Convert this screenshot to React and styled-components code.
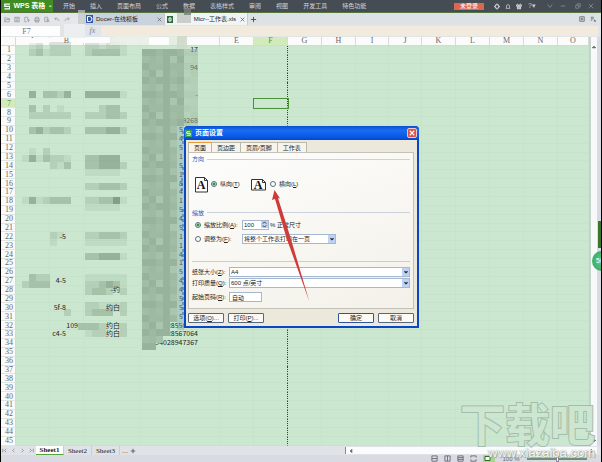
import { useState } from 'react';

import styled, { createGlobalStyle } from 'styled-components';

const GlobalStyle = createGlobalStyle`
  * {
    box-sizing: border-box;
  }

  body {
    margin: 0;
    overflow: hidden;
    font-family: 'Liberation Sans', 'Noto Sans CJK SC', sans-serif;
    font-size: 7px;
    line-height: 8px;
    color: #222;
  }

  button, input, select {
    font: inherit;
    color: inherit;
    margin: 0;
    padding: 0;
    border: none;
    background: none;
    outline: none;
  }
`;

const Window = styled.div`
  position: relative;
  display: flex;
  flex-direction: column;
  min-height: 100vh;
  border-left: 1px solid #000;
  border-right: 1px solid #000;
  background: #dde1e6;
  overflow: hidden;
`;

/* ---------- top bars ---------- */

const MenuBar = styled.header`
  display: flex;
  align-items: center;
  height: 13px;
  background: #454c54;
  border-bottom: 1px solid #55753f;
`;

const Brand = styled.button`
  display: flex;
  align-items: center;
  gap: 3px;
  width: 52px;
  height: 12px;
  padding-left: 3px;
  background: #3f8c22;
  color: #fff;
  white-space: nowrap;
`;

const Menus = styled.nav`
  display: flex;
  flex: 1;
  gap: 15px;
  padding-left: 10px;
`;

const MenuButton = styled.button`
  font-size: 6px;
  color: #d3d6d8;
  white-space: nowrap;
`;

const WindowTools = styled.div`
  display: flex;
  align-items: center;
  gap: 5px;
  padding-right: 7px;
`;

const LoginButton = styled.button`
  width: 30px;
  height: 7px;
  font-size: 6px;
  line-height: 7px;
  background: #d9684c;
  color: #fff;
`;

const FrameTools = styled.div`
  display: flex;
  gap: 5px;
  padding-left: 5px;
`;

const IconButton = styled.button`
  display: flex;
  align-items: center;
  justify-content: center;
  width: ${({ $wide }) => ($wide ? 10 : 6)}px;
  height: 8px;
  color: ${({ $color }) => $color || '#c8cbce'};
`;

const TabBar = styled.div`
  display: flex;
  align-items: center;
  height: 12px;
  background: #dde3e4;
`;

const QuickTools = styled.div`
  display: flex;
  align-items: center;
  gap: 4px;
  width: 83px;
  height: 12px;
  padding-left: 3px;
  background: #e3e5e9;
`;

const FileTab = styled.div`
  display: flex;
  align-items: center;
  gap: 3px;
  width: ${({ $active }) => ($active ? 83 : 81)}px;
  height: 12px;
  padding: 0 2px;
  font-size: 6px;
  background: ${({ $active }) => ($active ? '#f1f4f4' : '#c9d3df')};
  border-right: 1px solid #c6cccf;
  white-space: nowrap;
`;

const FileName = styled.span`
  flex: 1;
  text-align: ${({ $end }) => ($end ? 'right' : 'left')};
`;

const TabBarEnd = styled.div`
  display: flex;
  align-items: center;
  gap: 5px;
  margin-left: auto;
  padding-right: 5px;
`;

const FormulaBar = styled.div`
  display: flex;
  height: 12px;
  padding: 1px 3px 1px 0;
  background: #e1e4e8;
`;

const NameBox = styled.input`
  width: 59px;
  padding-right: 8px;
  background: #fdfdfd;
  font-family: 'Liberation Serif', serif;
  font-size: 8px;
  text-align: center;
  color: #777;
`;

const FxButton = styled.button`
  width: 41px;
  padding-left: 24px;
  font-family: 'Liberation Serif', serif;
  font-size: 8px;
  font-style: italic;
  color: #888;
`;

const FormulaInput = styled.input`
  flex: 1;
  min-width: 0;
  background: #f2ebdd;
`;

/* ---------- sheet ---------- */

const SheetArea = styled.main`
  position: relative;
  display: flex;
  flex: 1;
`;

const Grid = styled.table`
  flex: 1;
  height: calc(100vh - 53px);
  table-layout: fixed;
  border-collapse: separate;
  border-spacing: 0;
  background: #cbe7cf;
`;

const Col = styled.col`
  width: ${({ $width }) => $width}px;
`;

const ColumnHead = styled.th`
  height: 9px;
  padding: 0;
  font-family: 'Liberation Serif', serif;
  font-size: 8px;
  font-weight: normal;
  line-height: 8px;
  color: ${({ $active }) => ($active ? '#5b9440' : '#666')};
  background: ${({ $active }) => ($active ? '#d3ebba' : '#fbfcfa')};
  border-right: 1px solid #d5dcd5;
  border-bottom: 1px solid #cfdccf;
`;

const RowHead = styled.th`
  padding: 0 0 0 2px;
  font-family: 'Liberation Serif', serif;
  font-size: 8px;
  font-weight: normal;
  line-height: 7px;
  color: ${({ $active }) => ($active ? '#5b9440' : '#666')};
  background: ${({ $active }) => ($active ? '#d3ebba' : '#fafbfa')};
  border-right: 1px solid #cfdccf;
  border-bottom: 1px solid #dfe5df;
`;

const Cell = styled.td`
  padding: 0 ${({ $end }) => $end || 0}px 0 0;
  font-family: 'Noto Sans CJK SC', sans-serif;
  line-height: 7px;
  text-align: right;
  white-space: nowrap;
  border-right: 1px ${({ $pageEnd }) => ($pageEnd ? 'dotted #2f4833' : 'solid #c6e3cb')};
  border-bottom: 1px solid #c6e3cb;
  outline: ${({ $active }) => ($active ? '1px solid #4c9136' : 'none')};
`;

const MosaicLayer = styled.svg`
  position: absolute;
  left: 0;
  top: 0;
  pointer-events: none;
`;

const Scrollbar = styled.div`
  display: flex;
  flex-direction: column;
  align-items: center;
  justify-content: space-between;
  width: 12px;
  padding: 7px 4px 2px 2px;
  background: linear-gradient(to right, #c9d3ce 2px, #f8f9fa 2px, #f8f9fa 8px, #d8dae4 8px);
`;

const SheetBar = styled.div`
  display: flex;
  align-items: center;
  height: 9px;
  background: #dfe2e6;
`;

const SheetNav = styled.div`
  display: flex;
  gap: 2px;
  width: 35px;
  color: #8a9096;
`;

const SheetTab = styled.button`
  width: 28px;
  height: 9px;
  font-family: 'Liberation Serif', serif;
  font-weight: ${({ $active }) => ($active ? 'bold' : 'normal')};
  background: ${({ $active }) => ($active ? '#fff' : 'transparent')};
  border-right: 1px solid #c9cdd2;
  border-bottom: ${({ $active }) => ($active ? '1px solid #5aa33b' : 'none')};
`;

const HorizontalScroll = styled.div`
  display: flex;
  align-items: center;
  justify-content: space-between;
  width: 42%;
  height: 7px;
  margin-left: auto;
  margin-right: 4px;
  padding: 0 2px;
  background: #fafbfc;
  border-left: 1px solid #888;
`;

const StatusBar = styled.footer`
  display: flex;
  align-items: center;
  justify-content: flex-end;
  gap: 6px;
  height: 7px;
  padding-right: 14px;
  background: #d8dbe2;
  font-size: 6px;
  color: #667;
`;

const ZoomValue = styled.span`
  width: 20px;
  text-align: center;
`;

const ZoomRange = styled.input`
  appearance: none;
  width: 60px;
  height: 2px;
  background: #6c9070;

  &::-webkit-slider-thumb {
    appearance: none;
    width: 3px;
    height: 6px;
    background: #fff;
    border: 1px solid #889;
  }
`;

/* ---------- dialog ---------- */

const Dialog = styled.section`
  position: absolute;
  left: 183px;
  top: 126px;
  width: 235px;
  border: 2px solid #0b47c4;
  border-top: none;
  border-radius: 4px 4px 0 0;
  background: #ece9dc;
`;

const TitleBar = styled.div`
  display: flex;
  align-items: center;
  gap: 3px;
  height: 14px;
  margin: 0 -2px;
  padding: 0 2px 0 1px;
  border-radius: 4px 4px 0 0;
  background: linear-gradient(#0a4fd0, #1a6cf4 30%, #0758e2 80%, #0546c0);
  color: #fff;
`;

const Title = styled.h1`
  flex: 1;
  margin: 0;
  font-size: 7px;
  font-weight: bold;
`;

const CloseButton = styled.button`
  display: flex;
  align-items: center;
  justify-content: center;
  width: 10px;
  height: 10px;
  background: #d9534a;
  border: 1px solid #f1c6c4;
  border-radius: 2px;
`;

const DialogBody = styled.div`
  padding: 2px 3px 3px 2px;
`;

const Tabs = styled.div`
  display: flex;
`;

const DialogTab = styled.button`
  height: 10px;
  padding: 0 5px;
  font-size: 6px;
  line-height: 8px;
  background: #f6f4ec;
  border: 1px solid #b9b9ae;
  border-left-width: ${({ $active }) => ($active ? 1 : 0)}px;
  border-top-color: ${({ $active }) => ($active ? '#e69a3c' : '#b9b9ae')};
  border-bottom: none;
`;

const Panel = styled.div`
  display: flex;
  flex-direction: column;
  height: 157px;
  padding: 2px 3px;
  border: 1px solid #c3c2b8;
  background: linear-gradient(160deg, #fdfdfc, #f3f1e9);
`;

const GroupTitle = styled.h2`
  display: flex;
  align-items: center;
  gap: 3px;
  margin: 0;
  font-size: 6px;
  font-weight: normal;
  color: #2a56c0;

  &::after {
    content: '';
    flex: 1;
    height: 1px;
    background: #ccd2dc;
  }
`;

const Orientation = styled.div`
  display: flex;
  align-items: center;
  height: 46px;
  padding: 0 0 3px 3px;
`;

const Choice = styled.label`
  display: flex;
  align-items: center;
  gap: 3px;
  width: ${({ $width }) => ($width ? `${$width}px` : 'auto')};
  font-size: 6px;
  white-space: nowrap;
`;

const Radio = styled.input`
  appearance: none;
  width: 6px;
  height: 6px;
  border: 1px solid #4f7186;
  border-radius: 50%;
  background: ${({ checked }) => (checked ? 'radial-gradient(#2f9a35 1px, #fff 2px)' : '#fff')};
`;

const FormRow = styled.div`
  display: flex;
  align-items: center;
  height: ${({ $height }) => $height}px;
  padding-left: ${({ $indent }) => $indent || 0}px;
  font-size: 6px;
  white-space: nowrap;
`;

const FieldLabel = styled.label`
  width: 37px;
  font-size: 6px;
`;

const TextBox = styled.input`
  width: ${({ $width }) => $width}px;
  height: 10px;
  padding-left: 2px;
  background: #fff;
  border: 1px solid #a5b8cf;
`;

const SelectWrap = styled.div`
  display: flex;
  width: ${({ $width }) => ($width ? `${$width}px` : 'auto')};
  flex: ${({ $width }) => ($width ? 'none' : 1)};
  height: 10px;
  background: #fff;
  border: 1px solid #a5b8cf;
`;

const Select = styled.select`
  appearance: none;
  flex: 1;
  min-width: 0;
  padding-left: 1px;
  line-height: 8px;
`;

const Arrow = styled.span`
  display: flex;
  align-items: center;
  justify-content: center;
  width: 7px;
  background: #bfd1f4;
`;

const Spinner = styled.span`
  display: flex;
  align-items: center;
  width: 27px;
  height: 10px;
  margin-right: 1px;
  background: #fff;
  border: 1px solid #a5b8cf;
`;

const SpinInput = styled.input`
  flex: 1;
  min-width: 0;
  padding-left: 1px;
`;

const Rule = styled.hr`
  width: 100%;
  margin: 15px 0 4px;
  border: none;
  border-top: 1px solid #cfcec5;
`;

const Actions = styled.div`
  display: flex;
  gap: 4px;
  padding-top: 4px;
`;

const DialogButton = styled.button`
  width: 36px;
  height: 10px;
  margin-left: ${({ $push }) => ($push ? 'auto' : 0)};
  font-size: 6px;
  line-height: 8px;
  background: #fbfaf6;
  border: 1px solid ${({ $primary }) => ($primary ? '#2f5596' : '#56697c')};
  border-radius: 1px;
`;

/* ---------- things that float over the page ---------- */

const Pointer = styled.svg`
  position: absolute;
  left: 267px;
  top: 186px;
  pointer-events: none;
`;

const Watermark = styled.div`
  position: absolute;
  right: 6px;
  bottom: 3px;
  font-family: 'Noto Sans CJK SC', sans-serif;
  font-size: 45px;
  font-weight: bold;
  line-height: 47px;
  text-align: right;
  color: #cde6d1;
  -webkit-text-stroke: 2px #a3bda8;
  paint-order: stroke fill;
  pointer-events: none;
`;

const WatermarkUrl = styled.div`
  font-family: 'Liberation Sans', sans-serif;
  font-size: 13px;
  font-weight: normal;
  line-height: 13px;
  color: #f7f9f7;
  -webkit-text-stroke: 0;
  text-shadow: 0 0 1px #7c8a80, 1px 1px 1px #9aa79e;
`;

const SideHandle = styled.div`
  position: absolute;
  right: 0;
  top: 221px;
  width: 3px;
  height: 27px;
  background: #39762c;
`;

const SideBall = styled.div`
  position: absolute;
  right: -10px;
  top: 251px;
  width: 19px;
  height: 20px;
  padding: 6px 0 0 4px;
  border-radius: 50%;
  background: radial-gradient(#63c988, #2da35c);
  color: #fff;
`;

const columns = [
  ['A', 34], ['B', 34], ['C', 57], ['D', 79], ['E', 34], ['F', 34], ['G', 34], ['H', 34],
  ['I', 33], ['J', 33], ['K', 34], ['L', 34], ['M', 34], ['N', 34], ['O', null],
];

const rows = Array.from({ length: 45 }, (_, i) => i + 1);

const cells = {
  B22: '-5', B27: '4-5', B30: '5f-8', B32: '109', B33: 'c4-5',
  C28: '-约', C30: '约白', C32: '约白', C33: '约白',
  D1: '17', D3: '94', D6: '-', D9: '9268',
  D32: '028550174', D33: '028567064', D34: '94028947367',
};

// leftovers of the id numbers between the blurred strip and the dialog
'5451518415451141544555'.split('').forEach((digit, i) => {
  cells[`D${i + 10}`] = digit;
});

const cellEnd = { A: 0, B: 17, C: 20, D: 21 };

const endOf = (name, row) => {
  if (name === 'B' && row === 32) return 5;
  if (name === 'D' && row > 9 && row < 32) return 36;
  return cellEnd[name];
};

const TILE = 7;
const shades = { a: 0.1, b: 0.2, c: 0.34, d: 0.48, e: 0.66 };

// one string per band of tiles, keyed by its top edge
const bands = {
  42: '..ab.bbb..bbabba',
  49: '..bcabbb..bcccca',
  91: '..d.ccbd..ddddda',
  105: '..c.b.a.....bcc',
  112: '..bbbbbb..bbbccb',
  127: '..cdbccb..cccddb',
  148: '..a.b',
  155: '.adacbba..ccddd',
  162: '.....bac..ccdddb',
  169: '..........aaaaa',
  183: '..........bbcccb',
  197: '.adabccc..bbccea',
  204: '..........aaaaa',
  232: '.....ba...bbcccb',
  239: '.....a....aaaaaa',
  253: '..........ccddda',
  274: '..cbb.....aaaaaa',
  281: '.bccc.....bbcdca',
  288: '..........bccb.b',
  302: '..........bbaaab',
  309: '.......b..bccc.b',
  323: '.........cccb..b',
  330: '..........abb..b',
};

// the strip over the id numbers narrows towards its ends
const stripTiles = (y) => {
  if (y > 341) return 2;
  if (y > 334) return 3;
  if (y > 320) return 4;
  return y < 126 ? 8 : 5;
};

const stripFills = ['#a2bda6', '#9db99f', '#a6c1aa', '#98b39c', '#abc6af', '#9fbaa3'];

const Mosaic = () => {
  const tiles = [];
  Object.entries(bands).forEach(([top, band]) => {
    band.split('').forEach((mark, i) => {
      if (shades[mark]) {
        tiles.push({ x: 14 + i * TILE, y: top - 37, fill: '#5d7a62', opacity: shades[mark] });
      }
    });
  });
  for (let y = 49; y < 350; y += TILE) {
    for (let i = 0; i < stripTiles(y); i += 1) {
      const step = (i * i * 5 + (y / TILE) * (y / TILE) * 3 + (y / TILE) * i) % 6;
      tiles.push({
        x: 141 + i * TILE,
        y: y - 37,
        fill: stripFills[step],
        opacity: i > 5 ? 0.5 : 1,
      });
    }
  }
  return (
    <MosaicLayer width="220" height="320" aria-hidden="true">
      {tiles.map((t) => (
        <rect key={`${t.x}-${t.y}`} x={t.x} y={t.y} width={TILE} height={TILE} fill={t.fill} opacity={t.opacity} />
      ))}
      <rect x="176" y="89" width="7" height="204" fill="#7fa5b4" opacity="0.4" />
      <path d="M182 94v14M182 130v9M181 141v14M182 172v22M182 212v12M182 240v40" stroke="#2c5ea8" strokeDasharray="3 2" />
    </MosaicLayer>
  );
};

const TopBlur = styled.svg`
  position: absolute;
  left: 0;
  top: 0;
  pointer-events: none;
`;

const topTiles = [
  [77, 10, 7, 14, '#c3c9c8', 0.7], [70, 17, 7, 7, '#e6e8ea', 0.9], [63, 24, 21, 14, '#eceef0', 0.9],
  [23, 38, 26, 5, '#fbfcfb', 1], [74, 38, 35, 5, '#fbfcfb', 1],
  [109, 36, 39, 9, '#e9f0e6', 0.9], [148, 38, 20, 6, '#fdfdfd', 1], [168, 36, 16, 9, '#e2ebdf', 0.9],
  [176, 13, 14, 10, '#c5cbc6', 0.9], [183, 8, 7, 7, '#777f77', 0.8], [176, 36, 10, 13, '#ced9cc', 0.9],
];

const Glyph = ({ d, size = 7, width = 1 }) => (
  <svg width={size} height={size} viewBox="0 0 8 8" fill="none" stroke="currentColor" strokeWidth={width}>
    <path d={d} />
  </svg>
);

const WpsLogo = ({ color = '#fff' }) => (
  <svg width="7" height="7" viewBox="0 0 8 8" fill="none" stroke={color} strokeWidth="1.6">
    <path d="M7.5 1H1v2.8h6V7H.5" />
  </svg>
);

const quickIcons = [
  ['打开', 'M1 7V1.500h2l1 1h3V7zM1 7l1.500-3H8'],
  ['保存', 'M1 1h6v6H1zM2.500 1v2h3V1M2.500 7V5h3v2'],
  ['导出', 'M1 1h4v3M1 1v6h3M4 5h4M6 3.500v4'],
  ['打印', 'M2 3V1h4v2M1 3h6v3H1zM2 5h4v2.500H2z'],
  ['预览', 'M1 1h4v6H1zM4 4h2v2H4zM6 6l1.500 1.500'],
  ['撤销', 'M1 3h4l2 3M3 1L1 3l2 2'],
  ['恢复', 'M7 3H3L1 6M5 1l2 2-2 2'],
];

const windowIcons = [
  ['设置', 'M4 1.500a2.500 2.500 0 100 5 2.500 2.500 0 000-5M4 0v2M4 6v2M0 4h2M6 4h2', true],
  ['提醒', 'M1 6.500h6M2 6V3.500a2 2 0 014 0V6', false],
  ['皮肤', 'M2 1L.500 3 2 4v3h4V4l1.500-1L6 1 4 3zM3 3v4M5 3v4', true],
];

const DownArrow = () => (
  <Arrow>
    <Glyph d="M2 3l2 2 2-2" size={6} width={1.5} />
  </Arrow>
);

const PageIcon = ({ landscape }) => (
  <svg width={landscape ? 16 : 13} height="17" viewBox={landscape ? '0 0 16 17' : '0 0 13 17'}>
    <path
      d={landscape ? 'M.5 3.500h11l3 3v7.500H.5z' : 'M.5 1.500h9l3 3v11.500H.5z'}
      fill="#fff"
      stroke="#333"
    />
    <path d={landscape ? 'M11.500 3.500v3h3' : 'M9.500 1.500v3h3'} fill="none" stroke="#333" />
    <text
      x={landscape ? 7 : 6}
      y="13"
      textAnchor="middle"
      fontFamily="Liberation Serif, serif"
      fontWeight="bold"
      fontSize="12"
      fill="#111"
    >
      A
    </text>
  </svg>
);

const PageSetup = () => {
  const [orientation, setOrientation] = useState('portrait');
  const [scaling, setScaling] = useState('ratio');

  return (
    <Dialog role="dialog" aria-label="页面设置">
      <TitleBar>
        <svg width="7" height="7" viewBox="0 0 8 8">
          <rect width="8" height="8" fill="#35a341" />
          <path d="M6 2H2v2h4v2H2" fill="none" stroke="#fff" />
        </svg>
        <Title>页面设置</Title>
        <CloseButton aria-label="关闭">
          <Glyph d="M1 1l6 6M7 1L1 7" size={6} width={1.5} />
        </CloseButton>
      </TitleBar>
      <DialogBody>
        <Tabs>
          {['页面', '页边距', '页眉/页脚', '工作表'].map((tab, i) => (
            <DialogTab key={tab} $active={i === 0}>{tab}</DialogTab>
          ))}
        </Tabs>
        <Panel>
          <GroupTitle>方向</GroupTitle>
          <Orientation>
            <Choice $width={56}>
              <PageIcon />
              <Radio type="radio" name="orientation" checked={orientation === 'portrait'} onChange={() => setOrientation('portrait')} />
              <span>纵向(<u>T</u>)</span>
            </Choice>
            <Choice>
              <PageIcon landscape />
              <Radio type="radio" name="orientation" checked={orientation === 'landscape'} onChange={() => setOrientation('landscape')} />
              <span>横向(<u>L</u>)</span>
            </Choice>
          </Orientation>
          <GroupTitle>缩放</GroupTitle>
          <FormRow $height={16} $indent={3}>
            <Choice $width={47}>
              <Radio type="radio" name="scaling" checked={scaling === 'ratio'} onChange={() => setScaling('ratio')} />
              <span>缩放比例(<u>A</u>):</span>
            </Choice>
            <Spinner>
              <SpinInput aria-label="缩放比例" defaultValue="100" />
              <Arrow>
                <Glyph d="M2 3l2-2 2 2M2 5l2 2 2-2" size={7} />
              </Arrow>
            </Spinner>
            <span>% 正常尺寸</span>
          </FormRow>
          <FormRow $height={14} $indent={3}>
            <Choice $width={47}>
              <Radio type="radio" name="scaling" checked={scaling === 'fit'} onChange={() => setScaling('fit')} />
              <span>调整为(<u>F</u>):</span>
            </Choice>
            <SelectWrap $width={94}>
              <Select aria-label="调整为">
                <option>将整个工作表打印在一页</option>
              </Select>
              <DownArrow />
            </SelectWrap>
          </FormRow>
          <Rule />
          <FormRow $height={11}>
            <FieldLabel htmlFor="paper">纸张大小(<u>Z</u>):</FieldLabel>
            <SelectWrap>
              <Select id="paper">
                <option>A4</option>
              </Select>
              <DownArrow />
            </SelectWrap>
          </FormRow>
          <FormRow $height={11}>
            <FieldLabel htmlFor="quality">打印质量(<u>Q</u>):</FieldLabel>
            <SelectWrap>
              <Select id="quality">
                <option>600 点/英寸</option>
              </Select>
              <DownArrow />
            </SelectWrap>
          </FormRow>
          <FormRow $height={18}>
            <FieldLabel htmlFor="first-page">起始页码(<u>R</u>):</FieldLabel>
            <TextBox id="first-page" $width={33} defaultValue="自动" />
          </FormRow>
        </Panel>
        <Actions>
          <DialogButton>选项(<u>O</u>)...</DialogButton>
          <DialogButton>打印(<u>P</u>)...</DialogButton>
          <DialogButton $push $primary>确定</DialogButton>
          <DialogButton>取消</DialogButton>
        </Actions>
      </DialogBody>
    </Dialog>
  );
};

const Sheet = () => (
  <SheetArea>
    <Grid>
      <colgroup>
        <Col $width={15} />
        {columns.map(([name, width]) => (width ? <Col key={name} $width={width} /> : <col key={name} />))}
      </colgroup>
      <thead>
        <tr>
          <ColumnHead />
          {columns.map(([name]) => (
            <ColumnHead key={name} $active={name === 'F'}>{name}</ColumnHead>
          ))}
        </tr>
      </thead>
      <tbody>
        {rows.map((row) => (
          <tr key={row}>
            <RowHead $active={row === 7}>{row}</RowHead>
            {columns.map(([name]) => (
              <Cell
                key={name}
                $end={endOf(name, row)}
                $pageEnd={name === 'F'}
                $active={name === 'F' && row === 7}
              >
                {cells[name + row]}
              </Cell>
            ))}
          </tr>
        ))}
      </tbody>
    </Grid>
    <Scrollbar>
      <Glyph d="M2 5l2-2 2 2z" size={6} />
      <Glyph d="M2 3l2 2 2-2z" size={6} />
    </Scrollbar>
    <Mosaic />
  </SheetArea>
);

const App = () => (
  <>
    <GlobalStyle />
    <Window>
      <MenuBar>
        <Brand>
          <WpsLogo />
          <b>WPS 表格</b>
          <Glyph d="M2 3h4L4 5z" size={5} />
        </Brand>
        <Menus>
          {['开始', '插入', '页面布局', '公式', '数据', '表格样式', '审阅', '视图', '开发工具', '特色功能'].map((menu) => (
            <MenuButton key={menu}>{menu}</MenuButton>
          ))}
        </Menus>
        <WindowTools>
          <LoginButton>未登录</LoginButton>
          <span />
          {windowIcons.map(([label, d, bold]) => (
            <IconButton key={label} aria-label={label}>
              <Glyph d={d} width={bold ? 1.5 : 1} />
            </IconButton>
          ))}
          <IconButton $wide>?▾</IconButton>
          <FrameTools>
            <IconButton $color="#8b9197" aria-label="收起"><Glyph d="M1 2l3 4 3-4" size={6} /></IconButton>
            <IconButton $wide $color="#8b9197" aria-label="最小化"><Glyph d="M1 4h6" size={6} /></IconButton>
            <IconButton $wide $color="#8b9197" aria-label="还原"><Glyph d="M1 3h4v4H1zM3 3V1h4v4H5" size={6} /></IconButton>
            <IconButton $color="#8b9197" aria-label="退出"><Glyph d="M1 1l6 6M7 1L1 7" size={6} /></IconButton>
          </FrameTools>
        </WindowTools>
      </MenuBar>
      <TabBar>
        <QuickTools>
          {quickIcons.map(([label, d]) => (
            <IconButton key={label} $color="#989ea5" aria-label={label}><Glyph d={d} /></IconButton>
          ))}
        </QuickTools>
        <FileTab>
          <svg width="7" height="8" viewBox="0 0 7 8">
            <rect width="7" height="8" fill="#3159a0" />
            <path d="M1.500 1.500h2a2.500 2.500 0 010 5h-2z" fill="none" stroke="#fff" />
          </svg>
          <FileName>Docer-在线模板</FileName>
          <IconButton $color="#555" aria-label="关闭标签"><Glyph d="M1 1l6 6M7 1L1 7" size={5} /></IconButton>
        </FileTab>
        <FileTab $active>
          <svg width="6" height="7" viewBox="0 0 6 7">
            <rect width="6" height="7" fill="#2d6a3c" />
            <path d="M2 2h2v3H2z" fill="none" stroke="#fff" />
          </svg>
          <FileName $end>Micr--工作表.xls</FileName>
          <IconButton $color="#444" aria-label="关闭标签"><Glyph d="M1 1l6 6M7 1L1 7" size={5} /></IconButton>
        </FileTab>
        <IconButton $color="#444" $wide aria-label="新建标签"><Glyph d="M4 1v6M1 4h6" /></IconButton>
        <TabBarEnd>
          <IconButton $color="#566069" aria-label="窗口"><Glyph d="M1 1h6v6H1zM2 4h4M4 2v4" size={6} /></IconButton>
          <IconButton $color="#566069" aria-label="列表"><Glyph d="M1 1h4M1 3h4M1 5h2M5 6h3M6 4l1 3" size={7} /></IconButton>
        </TabBarEnd>
      </TabBar>
      <FormulaBar>
        <NameBox aria-label="名称框" defaultValue="F7" />
        <FxButton>fx</FxButton>
        <FormulaInput aria-label="编辑栏" />
      </FormulaBar>
      <Sheet />
      <SheetBar>
        <SheetNav>
          <Glyph d="M2 2v4M6 2L4 4l2 2" />
          <Glyph d="M5 2L3 4l2 2" />
          <Glyph d="M3 2l2 2-2 2" />
          <Glyph d="M2 2l2 2-2 2M6 2v4" />
        </SheetNav>
        <SheetTab $active>Sheet1</SheetTab>
        <SheetTab>Sheet2</SheetTab>
        <SheetTab>Sheet3</SheetTab>
        <IconButton $color="#555" $wide>...</IconButton>
        <IconButton $color="#444" aria-label="新建工作表"><Glyph d="M4 1v6M1 4h6" size={6} /></IconButton>
        <HorizontalScroll>
          <Glyph d="M5 2L3 4l2 2z" size={6} />
          <Glyph d="M3 2l2 2-2 2z" size={6} />
        </HorizontalScroll>
      </SheetBar>
      <StatusBar>
        <Glyph d="M1 1h6v6H1zM1 4h6" />
        <Glyph d="M1 1h6v6H1zM4 1v6" />
        <Glyph d="M1 1h6v6H1zM1 3h6M1 5h6" />
        <Glyph d="M1 3V1h6v2M1 5v2h6V5" />
        <svg width="12" height="7" viewBox="0 0 12 7">
          <rect width="12" height="7" fill="#a9d58d" />
          <path d="M2 1.500h5v4H2z" fill="#fff" stroke="#346b2d" />
        </svg>
        <ZoomValue>100 %</ZoomValue>
        <ZoomRange type="range" aria-label="显示比例" />
      </StatusBar>
      <TopBlur width="220" height="50" aria-hidden="true">
        {topTiles.map(([x, y, w, h, fill, opacity]) => (
          <rect key={`${x}-${y}`} x={x} y={y} width={w} height={h} fill={fill} opacity={opacity} />
        ))}
      </TopBlur>
      <SideHandle />
      <SideBall>50</SideBall>
      <PageSetup />
      <Watermark>
        下载吧
        <WatermarkUrl>www.xiazaiba.com</WatermarkUrl>
      </Watermark>
      <Pointer width="44" height="118" viewBox="0 0 44 118" aria-hidden="true">
        <path d="M6.500 4L12 12.500 10 12 22 50 41.500 116 18.500 52 7 13 4 14z" fill="#cf3b38" />
      </Pointer>
    </Window>
  </>
);

export default App;
